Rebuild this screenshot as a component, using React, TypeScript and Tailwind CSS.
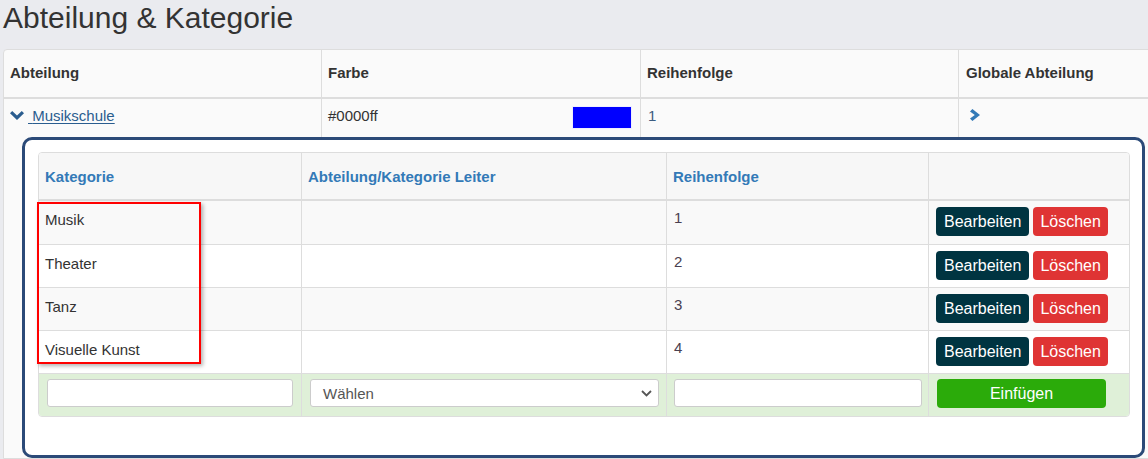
import React from 'react'

const rows = [
  { name: 'Musik', order: 1 },
  { name: 'Theater', order: 2 },
  { name: 'Tanz', order: 3 },
  { name: 'Visuelle Kunst', order: 4 },
]

// glyphicon-artige Chevrons
function ChevronDown() {
  return (
    <svg width="14" height="9" viewBox="0 0 14 9" className="inline-block mr-[4px] align-[1px]">
      <polygon points="0,2.2 2.2,0 7,4.6 11.8,0 14,2.2 7,9" fill="#2a5d8f" />
    </svg>
  )
}

function ChevronRight() {
  return (
    <svg width="10" height="12" viewBox="0 0 10 12">
      <polygon points="2.4,0 10,6 2.4,12 0,9.6 4.8,6 0,2.4" fill="#337ab7" />
    </svg>
  )
}

export default function App() {
  return (
    <div className="w-[1148px] h-[459px] overflow-hidden bg-[#eaebef] text-[#333] font-['Liberation_Sans',Arial,sans-serif]">
      <h2 className="pl-[3px] pt-[1px] text-[30px] leading-[33px] text-[#333]">Abteilung &amp; Kategorie</h2>

      {/* Äußere Tabelle */}
      <div className="mt-[15px] ml-[3px] w-[1276px] border border-[#ddd] rounded-tl-[4px] bg-[#fafafa] text-[15px]">
        <div className="grid grid-cols-[317px_319px_318px_318px] h-[49px] border-b-2 border-[#ddd] font-bold">
          <div className="flex items-center pl-[6px]">Abteilung</div>
          <div className="flex items-center pl-[6px] border-l border-[#ddd]">Farbe</div>
          <div className="flex items-center pl-[6px] border-l border-[#ddd]">Reihenfolge</div>
          <div className="flex items-center pl-[7px] border-l border-[#ddd]">Globale Abteilung</div>
        </div>
        <div className="grid grid-cols-[317px_319px_318px_318px] h-[38px] leading-[21px]">
          <div className="pl-[6px] pt-[6px]">
            <a className="text-[#2a5d8f] underline underline-offset-2 cursor-pointer">
              <ChevronDown />
              {' '}Musikschule
            </a>
          </div>
          <div className="flex justify-between pl-[6px] pr-[8px] pt-[6px] border-l border-[#ddd]">
            <span>#0000ff</span>
            <span className="w-[60px] h-[23px] mt-[1px] bg-[#0000ff] border border-[#eef]" />
          </div>
          <div className="pl-[7px] pt-[6px] border-l border-[#ddd] text-[#3b5b80]">1</div>
          <div className="pl-[11px] pt-[10px] border-l border-[#ddd]">
            <ChevronRight />
          </div>
        </div>

        {/* Kategorien-Panel */}
        <div className="pl-[18px]">
          <div className="w-[1123px] border-[3px] border-[#2b4a78] rounded-[10px] bg-white pt-[12px] pl-[13px] pr-[12px] pb-[38px]">
            <div className="relative">
              <div className="border border-[#ddd] rounded-[4px] overflow-hidden text-[15px] leading-[21px]">
                <div className="grid grid-cols-[262px_365px_262px_201px] h-[48px] bg-[#f7f7f7] border-b-2 border-[#ddd] font-bold text-[#337ab7]">
                  <div className="flex items-center pl-[6px]">Kategorie</div>
                  <div className="flex items-center pl-[6px] border-l border-[#ddd]">Abteilung/Kategorie Leiter</div>
                  <div className="flex items-center pl-[6px] border-l border-[#ddd]">Reihenfolge</div>
                  <div className="border-l border-[#ddd]" />
                </div>

                {rows.map((r, i) => (
                  <div
                    key={r.name}
                    className={
                      'grid grid-cols-[262px_365px_262px_201px] h-[43px] ' +
                      (i === 0 ? '' : 'border-t border-[#ddd] ') +
                      (i % 2 === 0 ? 'bg-[#f9f9f9]' : 'bg-white')
                    }
                  >
                    <div className="pl-[6px] pt-[8px]">{r.name}</div>
                    <div className="border-l border-[#ddd]" />
                    <div className="pl-[7px] pt-[6px] border-l border-[#ddd] text-[#4a4050]">{r.order}</div>
                    <div className="flex gap-[4px] pl-[7px] pt-[6px] border-l border-[#ddd]">
                      <button className="h-[29px] px-[8px] rounded-[4px] bg-[#003441] text-white text-[16px] leading-[29px]">Bearbeiten</button>
                      <button className="h-[29px] px-[7px] rounded-[4px] bg-[#df3434] text-white text-[16px] leading-[29px]">Löschen</button>
                    </div>
                  </div>
                ))}

                {/* Neue Kategorie */}
                <div className="grid grid-cols-[262px_365px_262px_201px] h-[43px] border-t border-[#ddd] bg-[#dff0d8]">
                  <div className="px-[8px] pt-[5px]">
                    <input className="w-full h-[28px] bg-white border border-[#ccc] rounded-[3px] outline-none" />
                  </div>
                  <div className="pl-[8px] pr-[7px] pt-[5px] border-l border-[#ddd]">
                    <div className="flex items-center justify-between h-[28px] bg-white border border-[#ccc] rounded-[3px] pl-[12px] pr-[6px] text-[#555]">
                      <span>Wählen</span>
                      <svg width="11" height="7" viewBox="0 0 11 7">
                        <polyline points="1,1 5.5,5.5 10,1" fill="none" stroke="#555" strokeWidth="1.8" />
                      </svg>
                    </div>
                  </div>
                  <div className="pl-[7px] pr-[6px] pt-[5px] border-l border-[#ddd]">
                    <input className="w-full h-[28px] bg-white border border-[#ccc] rounded-[3px] outline-none" />
                  </div>
                  <div className="pl-[8px] pt-[5px] border-l border-[#ddd]">
                    <button className="w-[169px] h-[29px] rounded-[4px] bg-[#2bab0a] text-white text-[16px]">Einfügen</button>
                  </div>
                </div>
              </div>

              {/* rote Markierung */}
              <div className="absolute left-[-1px] top-[50px] w-[164px] h-[162px] border-2 border-[#f00] shadow-[2px_2px_4px_rgba(0,0,0,0.3)] pointer-events-none" />
            </div>
          </div>
        </div>
      </div>
    </div>
  )
}
